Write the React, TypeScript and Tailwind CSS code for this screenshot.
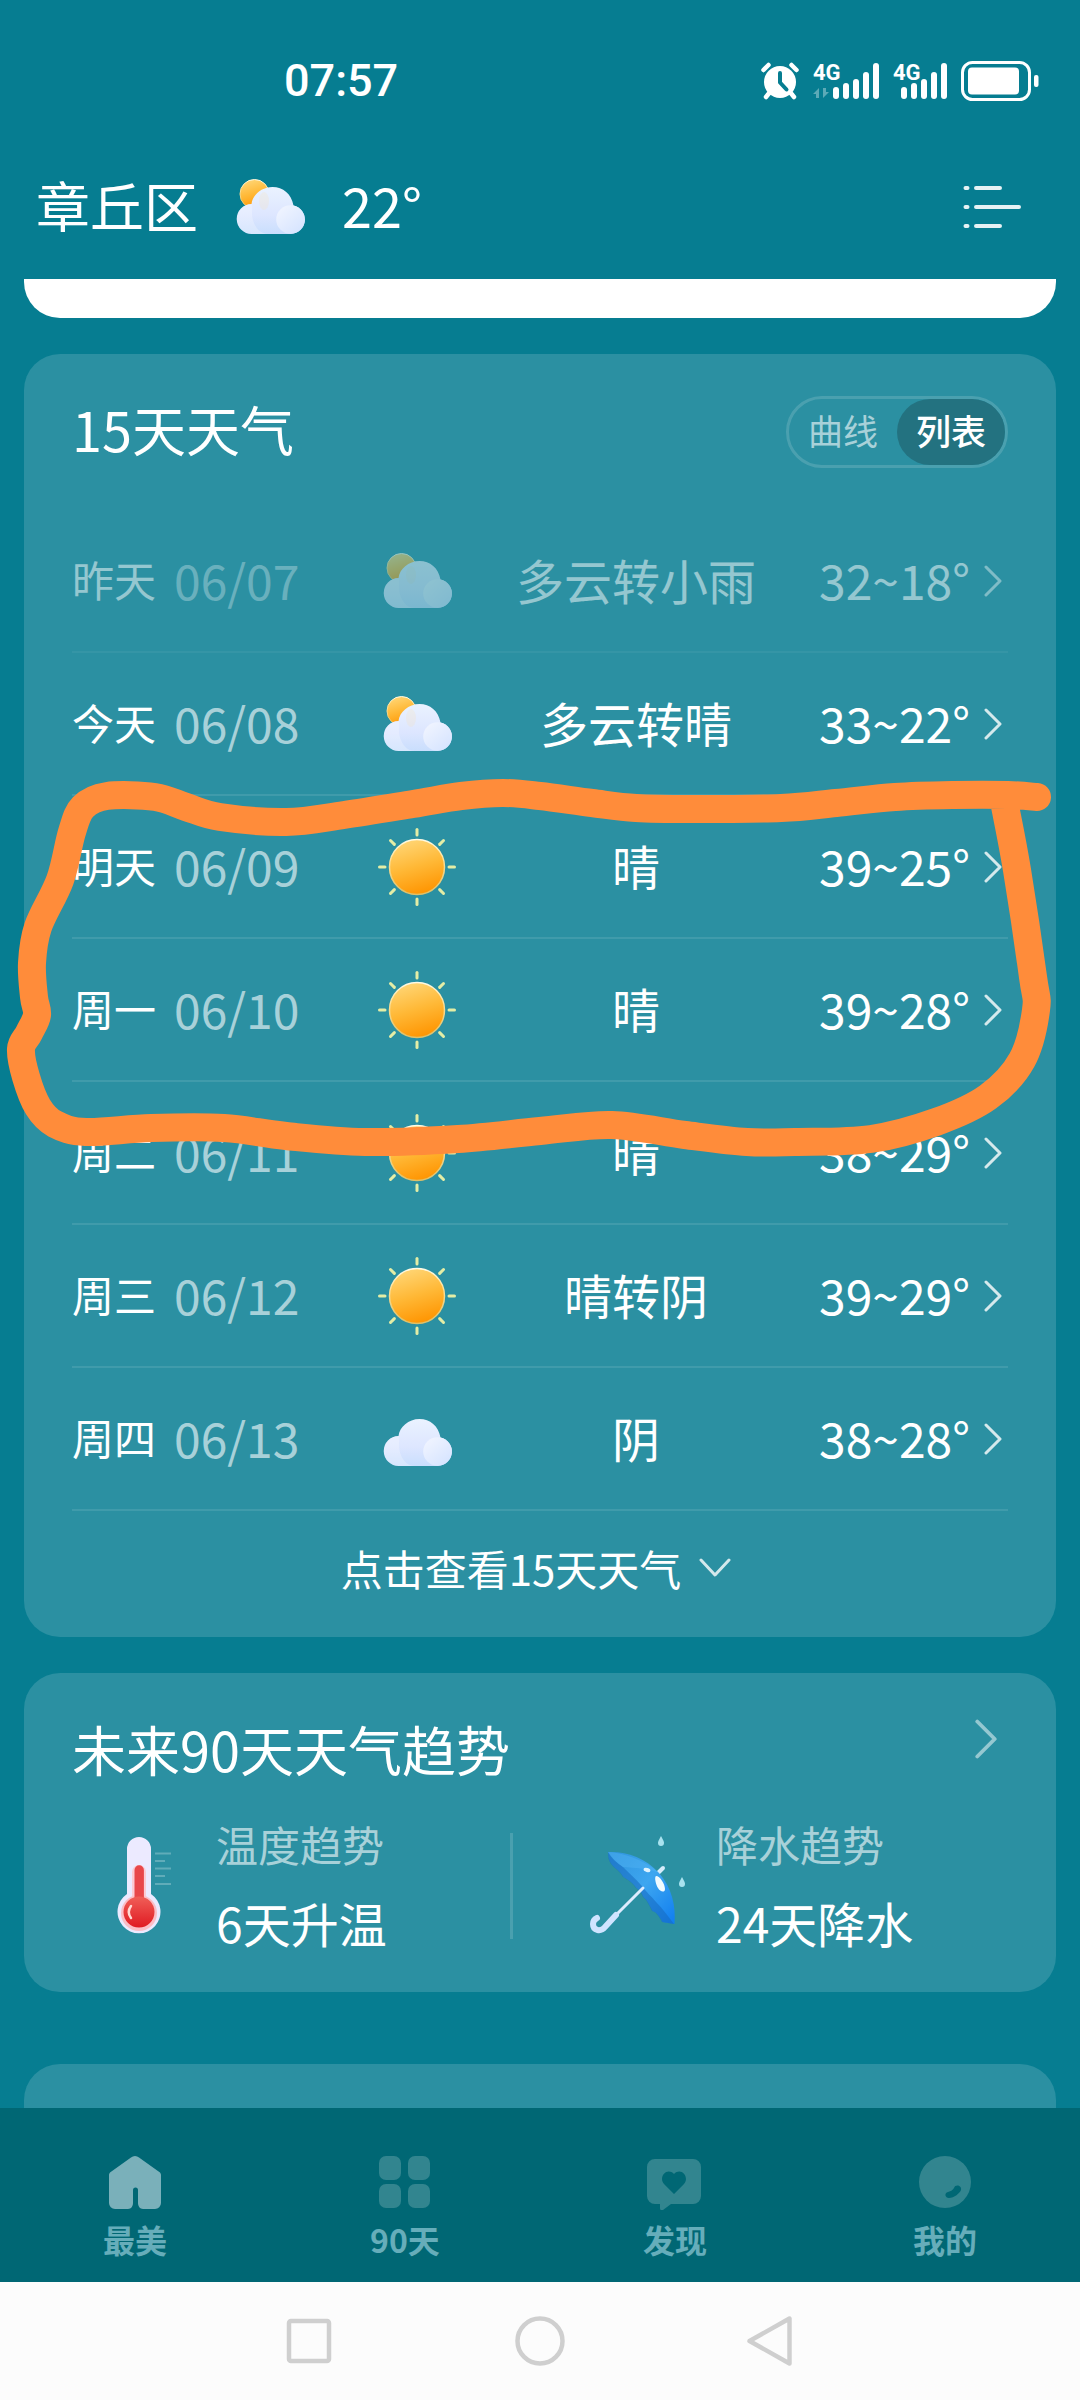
import type { ReactNode } from "react";

type Sky = "sun" | "partly" | "cloud";

interface Day {
  name: string;
  date: string;
  sky: Sky;
  text: string;
  temp: string;
  past?: boolean;
}

const days: Day[] = [
  { name: "昨天", date: "06/07", sky: "partly", text: "多云转小雨", temp: "32~18°", past: true },
  { name: "今天", date: "06/08", sky: "partly", text: "多云转晴", temp: "33~22°" },
  { name: "明天", date: "06/09", sky: "sun", text: "晴", temp: "39~25°" },
  { name: "周一", date: "06/10", sky: "sun", text: "晴", temp: "39~28°" },
  { name: "周二", date: "06/11", sky: "sun", text: "晴", temp: "38~29°" },
  { name: "周三", date: "06/12", sky: "sun", text: "晴转阴", temp: "39~29°" },
  { name: "周四", date: "06/13", sky: "cloud", text: "阴", temp: "38~28°" },
];

// hand-drawn marker around the two hottest days
const markerPoints = [
  [1037, 797], [1008, 795], [953, 795], [895, 797], [836, 803], [781, 808], [691, 809],
  [636, 808], [592, 803], [540, 796], [503, 793], [461, 796], [413, 804], [344, 815],
  [286, 822], [220, 817], [186, 807], [155, 797], [107, 796], [83, 807], [72, 832],
  [60, 880], [38, 927], [32, 963], [34, 997], [37, 1015], [29, 1033], [21, 1049],
  [26, 1077], [38, 1107], [55, 1124], [86, 1132], [151, 1128], [224, 1128], [286, 1136],
  [365, 1142], [458, 1139], [540, 1131], [612, 1125], [685, 1135], [747, 1142],
  [795, 1142], [871, 1139], [936, 1122], [988, 1097], [1022, 1060], [1036, 1010],
  [1033, 977], [1017, 870], [1005, 806],
];

function smoothPath(pts: number[][]) {
  let d = `M${pts[0][0]} ${pts[0][1]}`;
  for (let i = 0; i < pts.length - 1; i++) {
    const p0 = pts[i - 1] ?? pts[i];
    const p1 = pts[i];
    const p2 = pts[i + 1];
    const p3 = pts[i + 2] ?? p2;
    const c1 = [p1[0] + (p2[0] - p0[0]) / 6, p1[1] + (p2[1] - p0[1]) / 6];
    const c2 = [p2[0] - (p3[0] - p1[0]) / 6, p2[1] - (p3[1] - p1[1]) / 6];
    d += `C${c1[0]} ${c1[1]} ${c2[0]} ${c2[1]} ${p2[0]} ${p2[1]}`;
  }
  return d;
}

function Defs() {
  return (
    <svg className="absolute h-0 w-0" aria-hidden="true">
      <defs>
        <linearGradient id="sunFill" x1="0.3" y1="0" x2="0.6" y2="1">
          <stop offset="0" stopColor="#ffd676" />
          <stop offset="0.5" stopColor="#ffb836" />
          <stop offset="1" stopColor="#ff9400" />
        </linearGradient>
        <linearGradient id="sunRim" x1="0" y1="0" x2="0" y2="1">
          <stop offset="0" stopColor="#fffbe6" />
          <stop offset="0.35" stopColor="#ffe29a" />
          <stop offset="1" stopColor="#dcc06a" />
        </linearGradient>
        <linearGradient id="cloudFill" x1="0" y1="0" x2="0" y2="1">
          <stop offset="0" stopColor="#eaf2ff" />
          <stop offset="0.6" stopColor="#dde6ff" />
          <stop offset="1" stopColor="#c9defd" />
        </linearGradient>
        <linearGradient id="cloudLump" x1="0" y1="0" x2="0.8" y2="1">
          <stop offset="0" stopColor="#f3f6ff" />
          <stop offset="1" stopColor="#d6e4ff" />
        </linearGradient>
        <linearGradient id="canopy" x1="0" y1="0" x2="1" y2="1">
          <stop offset="0" stopColor="#2e93dc" />
          <stop offset="0.5" stopColor="#3da6f0" />
          <stop offset="1" stopColor="#0f7df0" />
        </linearGradient>
        <linearGradient id="mercury" x1="0" y1="0" x2="0" y2="1">
          <stop offset="0" stopColor="#f05f58" />
          <stop offset="1" stopColor="#e01a22" />
        </linearGradient>
      </defs>
    </svg>
  );
}

function SkyIcon({ sky }: { sky: Sky }) {
  if (sky === "sun") {
    return (
      <svg viewBox="0 0 80 80" className="h-20 w-20" aria-hidden="true">
        {[0, 45, 90, 135, 180, 225, 270, 315].map((a) => (
          <path
            key={a}
            d="M40 2.5v5.5"
            stroke="#e3eda6"
            strokeWidth="3"
            strokeLinecap="round"
            transform={`rotate(${a} 40 40)`}
          />
        ))}
        <circle cx="40" cy="40" r="27.5" fill="url(#sunFill)" stroke="url(#sunRim)" strokeWidth="1.5" />
      </svg>
    );
  }
  return (
    <svg viewBox="0 0 80 80" className="h-20 w-20" aria-hidden="true">
      {sky === "partly" && (
        <circle cx="24.5" cy="27" r="14.5" fill="url(#sunFill)" stroke="url(#sunRim)" strokeWidth="1" />
      )}
      <path
        d="M22 67a15 15 0 0 1-.5-30c1-9 10-17 21-17 10.5 0 19 7 21 18.5A14.4 14.4 0 0 1 61 67Z"
        fill="url(#cloudFill)"
      />
      <path d="M22 46c0 10 6 21 16 21H22a15 15 0 0 1-.5-30c.6 0 1 4 .5 9Z" fill="#ffffff" opacity="0.25" />
      <circle cx="60.5" cy="52.5" r="14.3" fill="url(#cloudLump)" />
      {sky === "partly" && <ellipse cx="34" cy="34" rx="5" ry="9" fill="#ffdf9e" opacity="0.18" />}
    </svg>
  );
}

function Chevron({ className }: { className: string }) {
  return (
    <svg viewBox="0 0 18 32" className={className} fill="none" stroke="currentColor" strokeWidth="3" strokeLinecap="round" strokeLinejoin="round" aria-hidden="true">
      <path d="M2 2l14 14L2 30" />
    </svg>
  );
}

function Signal({ data }: { data?: boolean }) {
  const x = data ? 20 : 8;
  const gap = 10;
  const tops = [25, 21, 17, 10, 1];
  return (
    <svg viewBox={data ? "0 0 66 38" : "0 0 54 38"} className={data ? "h-[38px] w-[66px] overflow-visible" : "h-[38px] w-[54px] overflow-visible"} fill="currentColor" role="img" aria-label="4G">
      <text x="0" y="18" fontFamily="Roboto, sans-serif" fontWeight="700" fontSize="22">4G</text>
      {tops.map((t, i) => (
        <rect key={t} x={x + i * gap} y={t} width="6" height={37 - t} rx="3" />
      ))}
      {data && (
        <path d="M6 36V26l-6 6h3v4zM10 26v10l6-6h-3v-4z" opacity="0.35" />
      )}
    </svg>
  );
}

function StatusBar() {
  return (
    <div className="flex h-[135px] items-center justify-between pt-[26px] pr-[41px] pl-[284px]">
      <time className="font-[Roboto,sans-serif] text-[45px] leading-[54px] font-medium">07:57</time>
      <div className="flex items-center gap-[14px]">
        <svg viewBox="0 0 38 38" className="h-[38px] w-[38px]" role="img" aria-label="闹钟">
          <g stroke="currentColor" strokeWidth="4.5" strokeLinecap="round">
            <path d="M2.5 8l5-5M35.5 8l-5-5M9 30l-4 5M29 30l4 5" />
          </g>
          <circle cx="19" cy="20" r="16" fill="currentColor" />
          <path d="M19 11v9.5l6.5 7" fill="none" stroke="#067d91" strokeWidth="4" strokeLinecap="round" strokeLinejoin="round" />
        </svg>
        <Signal data />
        <Signal />
        <svg viewBox="0 0 78 40" className="h-10 w-[78px]" role="img" aria-label="电量">
          <rect x="1.5" y="1.5" width="67" height="37" rx="10" fill="none" stroke="currentColor" strokeWidth="3" />
          <rect x="7" y="6.5" width="51" height="27" rx="4" fill="currentColor" />
          <rect x="73" y="14" width="4.5" height="12" rx="2" fill="currentColor" />
        </svg>
      </div>
    </div>
  );
}

function CityHeader() {
  return (
    <header className="flex h-36 items-center justify-between pr-[58px] pl-9">
      <div className="flex items-center gap-8 text-[54px] leading-[72px]">
        <h1 className="pb-1">章丘区</h1>
        <SkyIcon sky="partly" />
        <span className="pb-1">22°</span>
      </div>
      <button type="button" aria-label="菜单">
        <svg viewBox="0 0 60 44" className="h-11 w-[60px]" stroke="currentColor" strokeWidth="4" strokeLinecap="round" opacity="0.9" aria-hidden="true">
          <path d="M3.5 3h2M14 3h24M3.5 22h2M14 22h43M3.5 41h2M14 41h24" />
        </svg>
      </button>
    </header>
  );
}

function DayRow({ day }: { day: Day }) {
  return (
    <li className={day.past ? "opacity-50" : ""}>
      <a href="#day" className="grid h-[143px] grid-cols-[275px_140px_1fr_223px] items-center border-b-2 border-white/10 text-[48px] leading-[64px]">
        <span className="flex items-center gap-[18px] pb-1">
          <span className="text-[42px]">{day.name}</span>
          <span className="text-white/60">{day.date}</span>
        </span>
        <span className="flex justify-center">
          <SkyIcon sky={day.sky} />
        </span>
        <span className="pb-1 text-center">{day.text}</span>
        <span className="flex items-center justify-end gap-[14px] pr-[6px]">
          <span className="pb-1">{day.temp}</span>
          <Chevron className="h-8 w-[18px] text-white/80" />
        </span>
      </a>
    </li>
  );
}

function Forecast() {
  return (
    <section className="relative mt-9 rounded-[36px] bg-[#2b90a2] px-12 pt-[42px]">
      <div className="mb-[42px] flex items-start justify-between">
        <h2 className="text-[54px] leading-[66px]">15天天气</h2>
        <div className="flex h-[72px] rounded-full border-[3px] border-white/15 text-[35px] leading-[48px]">
          <button type="button" className="px-[19px] pb-1 text-white/60">曲线</button>
          <button type="button" className="rounded-full bg-[#237280] px-[19px] pb-1 font-medium" aria-pressed="true">列表</button>
        </div>
      </div>
      <ul>
        {days.map((day) => (
          <DayRow key={day.date} day={day} />
        ))}
      </ul>
      <button type="button" className="flex h-[126px] w-full items-center justify-center gap-[18px] pr-2 pb-3 text-[42px] leading-[56px]">
        点击查看15天天气
        <svg viewBox="0 0 32 20" className="h-5 w-8" fill="none" stroke="currentColor" strokeWidth="3" strokeLinecap="round" strokeLinejoin="round" opacity="0.8" aria-hidden="true">
          <path d="M2 2l14 15L30 2" />
        </svg>
      </button>
      <svg viewBox="0 770 1080 400" className="pointer-events-none absolute -inset-x-6 top-[416px]" fill="none" stroke="#ff8c3a" strokeWidth="28" strokeLinecap="round" strokeLinejoin="round" aria-hidden="true">
        <path d={smoothPath(markerPoints)} />
      </svg>
    </section>
  );
}

function Thermometer() {
  return (
    <svg viewBox="-28 -2 128 104" className="h-[104px] w-32" aria-hidden="true">
      <path d="M11 13a12 12 0 0 1 24 0v45a21.5 21.5 0 1 1-24 0Z" fill="#eceaff" />
      <circle cx="23" cy="77" r="18" fill="#ffb3b8" opacity="0.8" />
      <path d="M16 36a7 7 0 0 1 14 0v28H16Z" fill="#ffc4c9" opacity="0.8" />
      <path d="M18.5 34a4.7 4.7 0 0 1 9.4 0v30h-9.4Z" fill="#e8474a" />
      <circle cx="23" cy="76" r="15.5" fill="url(#mercury)" />
      <path d="M15 70c-3 4-3 8 0 12" fill="none" stroke="#ffd9d3" strokeWidth="2.5" strokeLinecap="round" />
      <path d="M39 17.5h16M39 25h10M39 32.5h16M39 40h10M39 48h16" stroke="#ffffff" strokeWidth="2" opacity="0.25" />
    </svg>
  );
}

function Umbrella() {
  return (
    <svg viewBox="0 0 128 104" className="h-[104px] w-32" aria-hidden="true">
      <path d="M71 38l4-4" stroke="#d5ecfb" strokeWidth="4" strokeLinecap="round" />
      <path d="M20 18c17-1 37 5 51 21 13 15 17 33 15.5 51l-12-2c-3-6-6-10-10-11-3-6-5-11-9-14-2-5-4-7-7-9-4-6-8-8-13-11-4-7-8-8-12-13-3-4-3-8-3.500-12Z" fill="url(#canopy)" />
      <path d="M20 18c4 7 9 11 15 15 7 7 13 12 18 18 6 8 11 12 15 17 7 7 12 14 18 22l-12-2c-3-6-6-10-10-11-3-6-5-11-9-14-2-5-4-7-7-9-4-6-8-8-13-11-4-7-8-8-12-13-3-4-3-8-3-12Z" fill="#1569bf" opacity="0.55" />
      <path d="M20 18c16 1 35 7 51 21-12-5-24-5-36-6-6-4-11-9-15-15Z" fill="#56b6f4" opacity="0.4" />
      <ellipse cx="59" cy="36" rx="3.5" ry="2" fill="#dff3ff" transform="rotate(15 59 36)" />
      <path d="M68 42c4 0 9 8 9 13 0 4-5 3-7-1-2-3-4-11-2-12Z" fill="#f1fbff" />
      <path d="M55 54L28 81" stroke="#dcecff" strokeWidth="3" strokeLinecap="round" />
      <path d="M28 81L17 93c-4 5-12 4-12-3 0-3 2-5 4-6" fill="none" stroke="#cfe4ff" strokeWidth="6" strokeLinecap="round" strokeLinejoin="round" />
      <path d="M73 2c2 4 3 5 3 7a3 3 0 0 1-6 0c0-2 1-3 3-7ZM94 43c2 4 3 5 3 7a3 3 0 0 1-6 0c0-2 1-3 3-7Z" fill="#a8e2ef" />
    </svg>
  );
}

function Trend({ icon, label, value }: { icon: ReactNode; label: string; value: string }) {
  return (
    <div className="flex items-center">
      {icon}
      <div>
        <p className="text-[42px] leading-[72px] text-white/60">{label}</p>
        <p className="text-[48px] leading-[84px]">{value}</p>
      </div>
    </div>
  );
}

function Trends() {
  return (
    <section className="mt-9 rounded-[36px] bg-[#2b90a2] px-12 pt-[42px] pb-7">
      <div className="flex items-start justify-between pr-[10px]">
        <h2 className="text-[54px] leading-[68px]">未来90天天气趋势</h2>
        <a href="#trend" aria-label="查看趋势" className="pt-1">
          <Chevron className="h-10 w-6 text-white/50" />
        </a>
      </div>
      <div className="mt-[25px] grid grid-cols-[438px_3px_1fr] items-center">
        <div className="pl-4">
          <Trend icon={<Thermometer />} label="温度趋势" value="6天升温" />
        </div>
        <div className="h-[106px] bg-white/15" />
        <div className="pl-[75px]">
          <Trend icon={<Umbrella />} label="降水趋势" value="24天降水" />
        </div>
      </div>
    </section>
  );
}

const tabs = [
  {
    label: "最美",
    active: true,
    icon: <path d="M24 3.5a6 6 0 0 1 8 0l21 15a4 4 0 0 1 1 3V49a6 6 0 0 1-6 6H36a6 6 0 0 1-5-6V36a2.5 2.5 0 0 0-5 0v13a6 6 0 0 1-5 6H8a6 6 0 0 1-6-6V21.5a4 4 0 0 1 1-3Z" />,
  },
  {
    label: "90天",
    icon: (
      <>
        <rect x="2" y="2" width="22" height="24" rx="7" />
        <rect x="31" y="2" width="22" height="24" rx="7" />
        <rect x="2" y="30" width="22" height="24" rx="7" />
        <rect x="31" y="30" width="22" height="24" rx="7" />
      </>
    ),
  },
  {
    label: "发现",
    icon: <path fillRule="evenodd" d="M8 5h38a8 8 0 0 1 8 8v29a8 8 0 0 1-8 8H24l-8 6q-3 1-3-2v-4H8a8 8 0 0 1-8-8V13a8 8 0 0 1 8-8ZM27 40l10-10c6-7-3-17-10-10-7-7-16 3-10 10Z" />,
  },
  {
    label: "我的",
    icon: <path fillRule="evenodd" d="M28 2a26 26 0 1 1 0 52a26 26 0 0 1 0-52ZM32 44c5 0 11-5 12-8 1-5-6-6-7-2-1 2-3 3-6 4-4 1-3 6 1 6Z" />,
  },
];

function TabBar() {
  return (
    <nav className="grid h-[174px] grid-cols-4 bg-[#006774]">
      {tabs.map((tab) => (
        <a key={tab.label} href="#tab" className="flex flex-col items-center gap-[7px] pt-[46px]">
          <svg viewBox="0 0 56 56" className={tab.active ? "h-14 w-14 text-[#7ab0ba]" : "h-14 w-14 text-[#32858f]"} fill="currentColor" aria-hidden="true">
            {tab.icon}
          </svg>
          <span className="text-[32px] leading-[44px] font-bold text-[#66adba]">{tab.label}</span>
        </a>
      ))}
    </nav>
  );
}

function SystemNav() {
  const button = "h-[50px] w-[50px]";
  return (
    <div className="flex h-[118px] items-center justify-center gap-[181px] bg-[#fcfcfc] text-[#cfcfcf]">
      <button type="button" aria-label="最近任务">
        <svg viewBox="0 0 50 50" className={button} fill="none" stroke="currentColor" strokeWidth="4.5" aria-hidden="true">
          <rect x="5" y="5" width="40" height="40" rx="2" />
        </svg>
      </button>
      <button type="button" aria-label="主页">
        <svg viewBox="0 0 50 50" className={button} fill="none" stroke="currentColor" strokeWidth="4.5" aria-hidden="true">
          <circle cx="25" cy="25" r="22.5" />
        </svg>
      </button>
      <button type="button" aria-label="返回">
        <svg viewBox="0 0 50 50" className={button} fill="none" stroke="currentColor" strokeWidth="4.5" strokeLinejoin="round" aria-hidden="true">
          <path d="M43.5 2.5v45L3.5 25Z" />
        </svg>
      </button>
    </div>
  );
}

export default function App() {
  return (
    <div className="flex min-h-screen flex-col bg-[#067d91] font-['Noto_Sans_CJK_SC',sans-serif] text-white">
      <Defs />
      <StatusBar />
      <CityHeader />
      <main className="flex flex-1 flex-col px-6">
        <div className="h-[39px] rounded-b-[36px] bg-white" />
        <Forecast />
        <Trends />
        <div className="mt-[72px] min-h-10 flex-1 rounded-t-[36px] bg-[#2b90a2]" />
      </main>
      <TabBar />
      <SystemNav />
    </div>
  );
}
